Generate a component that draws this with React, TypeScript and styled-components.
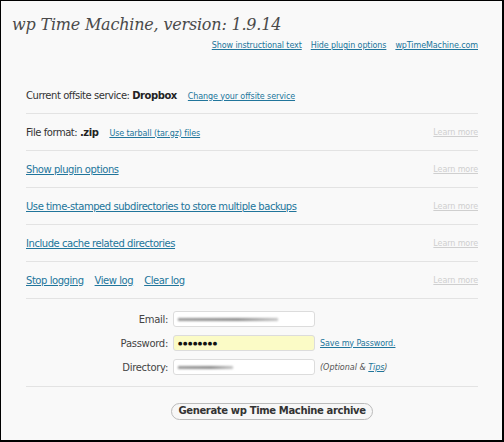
import React from 'react';
import styled, { createGlobalStyle } from 'styled-components';

const GlobalStyle = createGlobalStyle`
  html, body {
    margin: 0;
    padding: 0;
    background: #ffffff;
  }
`;

const Frame = styled.div`
  box-sizing: border-box;
  width: 504px;
  height: 442px;
  background: #f9f9f9;
  border: 1px solid #000;
  border-right-width: 2px;
  border-bottom-width: 2px;
  font-family: 'DejaVu Sans', Verdana, sans-serif;
  color: #333;
  overflow: hidden;
`;

const Header = styled.div`
  padding: 12px 24px 0 11px;
`;

const Title = styled.h2`
  margin: 0;
  font-family: 'DejaVu Serif', Georgia, serif;
  font-style: italic;
  font-weight: normal;
  font-size: 16px;
  letter-spacing: -0.2px;
  line-height: 24px;
  color: #4a4a4a;
`;

const TopLinks = styled.div`
  display: flex;
  justify-content: flex-end;
  gap: 9px;
  margin-top: 4px;
`;

const Link = styled.a<{ $big?: boolean; $muted?: boolean }>`
  font-size: ${(p) => (p.$big ? 10 : 8)}px;
  letter-spacing: ${(p) => (p.$big ? '-0.45px' : '-0.1px')};
  color: ${(p) => (p.$muted ? '#cfcfcf' : '#21759b')};
  text-decoration: underline;
  cursor: pointer;
  white-space: nowrap;
`;

const Options = styled.div`
  margin: 27px 24px 0 25px;
`;

const Row = styled.div`
  display: flex;
  align-items: center;
  height: 36px;
  border-bottom: 1px solid #e3e3e3;
  font-size: 10px;
  letter-spacing: -0.45px;
`;

const RowMain = styled.div`
  flex: 1;
  display: flex;
  align-items: baseline;
  gap: 11px;
`;

const Strong = styled.b`
  font-weight: bold;
  color: #222;
`;

const Form = styled.div`
  display: grid;
  grid-template-columns: 142px 142px auto;
  column-gap: 5px;
  row-gap: 8px;
  align-items: center;
  padding: 12px 0 11px;
  border-bottom: 1px solid #e3e3e3;
`;

const Label = styled.label`
  text-align: right;
  font-size: 10px;
  letter-spacing: -0.3px;
  color: #444;
`;

const Field = styled.div<{ $highlight?: boolean }>`
  box-sizing: border-box;
  height: 16px;
  display: flex;
  align-items: center;
  padding: 0 4px;
  background: ${(p) => (p.$highlight ? '#fbfbc6' : '#ffffff')};
  border: 1px solid #dcdcdc;
  border-radius: 3px;
`;

const Smudge = styled.span<{ $w: number }>`
  display: block;
  width: ${(p) => p.$w}px;
  height: 3px;
  background: linear-gradient(90deg, #888, #777 60%, #bbb);
  filter: blur(1.2px);
  opacity: 0.85;
`;

const Dots = styled.span`
  font-size: 5px;
  letter-spacing: 0.6px;
  line-height: 1;
  color: #111;
`;

const Note = styled.span`
  font-size: 8px;
  font-style: italic;
  color: #555;
`;

const Actions = styled.div`
  display: flex;
  justify-content: center;
  padding: 16px 0 0 40px;
`;

const Button = styled.button`
  font-family: 'DejaVu Sans', Verdana, sans-serif;
  font-size: 10px;
  font-weight: bold;
  letter-spacing: -0.35px;
  color: #333;
  background: #f7f7f7;
  border: 1px solid #bbb;
  border-radius: 9px;
  padding: 1px 6px 2px;
  height: 17px;
  line-height: 12px;
`;

const rows = ['format', 'options', 'stamped', 'cache', 'log'];

const Learn = () => <Link $muted>Learn more</Link>;

export default function App() {
  const renderMain = (key: string) => {
    switch (key) {
      case 'format':
        return (
          <>
            <span>
              File format: <Strong>.zip</Strong>
            </span>
            <Link>Use tarball (tar.gz) files</Link>
          </>
        );
      case 'options':
        return <Link $big>Show plugin options</Link>;
      case 'stamped':
        return <Link $big>Use time-stamped subdirectories to store multiple backups</Link>;
      case 'cache':
        return <Link $big>Include cache related directories</Link>;
      default:
        return (
          <>
            <Link $big>Stop logging</Link>
            <Link $big>View log</Link>
            <Link $big>Clear log</Link>
          </>
        );
    }
  };

  return (
    <>
      <GlobalStyle />
      <Frame>
        <Header>
          <Title>wp Time Machine, version: 1.9.14</Title>
          <TopLinks>
            <Link>Show instructional text</Link>
            <Link>Hide plugin options</Link>
            <Link>wpTimeMachine.com</Link>
          </TopLinks>
        </Header>
        <Options>
          <Row>
            <RowMain>
              <span>
                Current offsite service: <Strong>Dropbox</Strong>
              </span>
              <Link>Change your offsite service</Link>
            </RowMain>
          </Row>
          {rows.map((key) => (
            <Row key={key}>
              <RowMain>{renderMain(key)}</RowMain>
              <Learn />
            </Row>
          ))}
          <Form>
            <Label>Email:</Label>
            <Field>
              <Smudge $w={100} />
            </Field>
            <span />
            <Label>Password:</Label>
            <Field $highlight>
              <Dots>●●●●●●●●</Dots>
            </Field>
            <Link>Save my Password.</Link>
            <Label>Directory:</Label>
            <Field>
              <Smudge $w={55} />
            </Field>
            <Note>
              (Optional &amp; <Link>Tips</Link>)
            </Note>
          </Form>
          <Actions>
            <Button>Generate wp Time Machine archive</Button>
          </Actions>
        </Options>
      </Frame>
    </>
  );
}
